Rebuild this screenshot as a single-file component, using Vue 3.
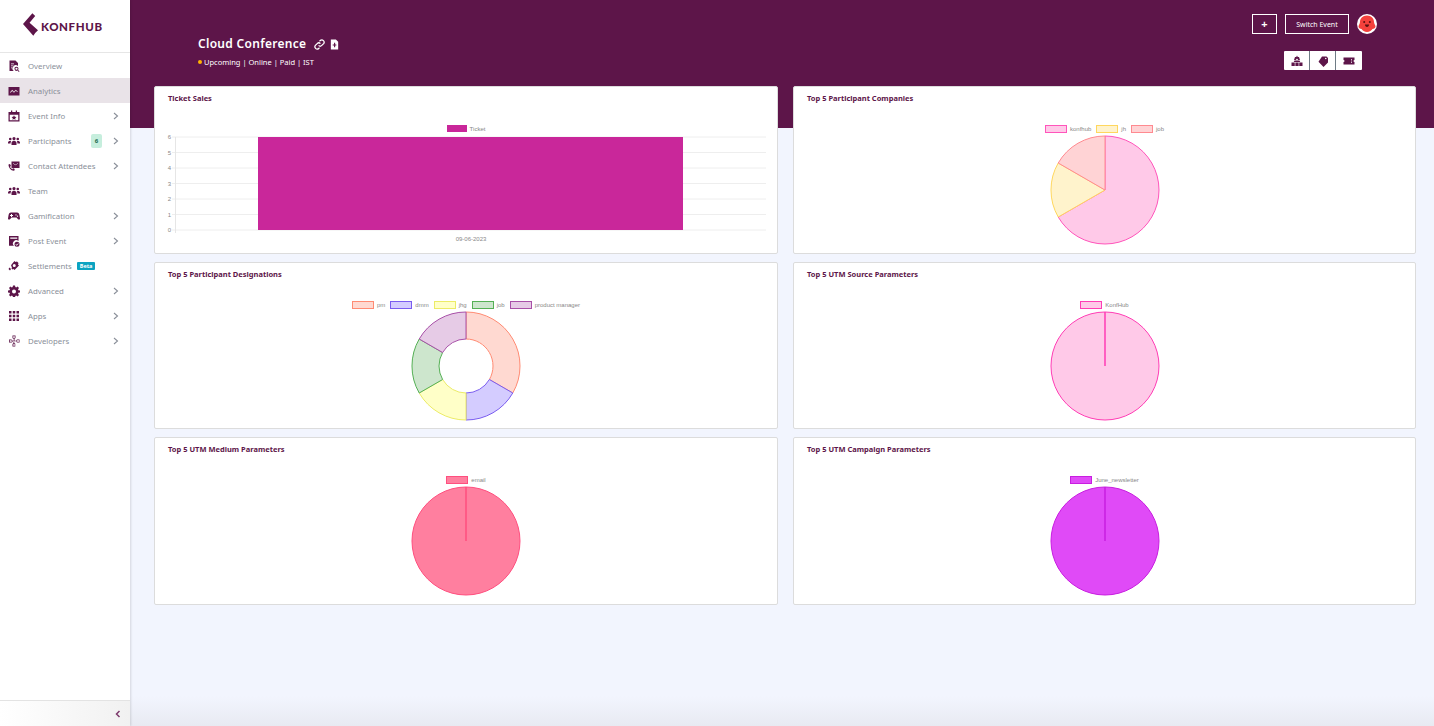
<script setup>
const purple = '#5d1549'

const people = 'M12 4a3.2 3.2 0 1 1 0 6.4A3.2 3.2 0 0 1 12 4zM4.5 5.5a2.6 2.6 0 1 1 0 5.2 2.6 2.6 0 0 1 0-5.2zM19.5 5.5a2.6 2.6 0 1 1 0 5.2 2.6 2.6 0 0 1 0-5.2zM7 20v-4c0-2.5 2-4.5 5-4.5s5 2 5 4.5v4zM0 17v-2c0-2 1.500-3.200 4-3.200 1 0 1.700.2 2.300.5C5.500 13.300 5.200 14.600 5.200 17zM24 17v-2c0-2-1.500-3.200-4-3.200-1 0-1.700.2-2.300.5.8 1 1.100 2.300 1.100 4.700z'

const menu = [
  { label: 'Overview', icon: 'M3 1h12l5 5v6a6.500 6.500 0 0 0-8.500 10H3zM6 7h6v1.500H6zM6 11h5v1.500H6zM6 15h3v1.500H6zM17 13.500a4 4 0 0 1 3.200 6.300l2.800 2.800-1.200 1.200-2.800-2.800A4 4 0 1 1 17 13.500zM17 15.300a2.200 2.200 0 1 0 0 4.400 2.200 2.200 0 0 0 0-4.400z' },
  { label: 'Analytics', active: true, icon: 'M1 4h22v17H1zM4 14.500l1.200 1.200L8.500 12l3.500 3.500 3.500-4 3 2.500 1.100-1.200-4.200-3.500-3.500 4L8.500 9.500z' },
  { label: 'Event Info', arrow: true, icon: 'M6 1h2.500v3h7V1H18v3h5v19H1V4h5zM3.500 9.500v11h17v-11zM12 10.500l1.500 3.100 3.400.4-2.500 2.300.7 3.400-3.100-1.700-3.100 1.700.7-3.400L7.100 14l3.400-.4z' },
  { label: 'Participants', arrow: true, badge: '6', icon: people },
  { label: 'Contact Attendees', arrow: true, icon: 'M7 3h16v13H12l-3 3v-3H7zM10 6v1l5 3.500L20 7V6l-5 3.500zM1 9l3-1 2 4-2 1.500c.6 2 2 3.500 4 4.300L9.500 16l4 2-1 3.500C6 22 1 15.500 1 9z' },
  { label: 'Team', icon: people },
  { label: 'Gamification', arrow: true, icon: 'M6 5h12c3 0 4.500 2.500 5 6l1 6c.2 2-2.500 3-4 1.500L17 15H7l-3 3.500C2.500 20 -.2 19 0 17l1-6c.5-3.500 2-6 5-6zM6 8v2H4v2h2v2h2v-2h2v-2H8V8zM16 8.500a1.300 1.300 0 1 0 0 2.600 1.300 1.300 0 0 0 0-2.600zM19 11a1.300 1.300 0 1 0 0 2.600 1.300 1.300 0 0 0 0-2.600z' },
  { label: 'Post Event', arrow: true, icon: 'M2 2h19v10a6.500 6.500 0 0 0-9 9.500H2zM4.500 5v2.500h14V5zM18 13.500a5 5 0 1 1 0 10 5 5 0 0 1 0-10zM20.500 16.500L17.300 19.700 15.800 18.200 15 19l2.300 2.300 4-4z' },
  { label: 'Settlements', beta: true, icon: 'M13 2l2 2 3-1 3 3-1 3 2 2-9 9-2-2-2 1-2-2 1-3-2-2 1-3zM12.500 8a3 3 0 1 0 0 6 3 3 0 0 0 0-6zM3 15l3 3-2 3-3-3z' },
  { label: 'Advanced', arrow: true, icon: 'M10 1h4l.7 3.200 1.700.7L19.200 3 22 5.800l-1.900 2.800.7 1.700L24 11v4l-3.200.7-.7 1.700 1.900 2.800L19.200 23l-2.800-1.900-1.700.7L14 25h-4l-.7-3.200-1.700-.7L4.800 23 2 20.200l1.900-2.800-.7-1.700L0 15v-4l3.200-.7.700-1.700L2 5.800 4.800 3l2.800 1.900 1.700-.7zM12 9a4 4 0 1 0 0 8 4 4 0 0 0 0-8z' },
  { label: 'Apps', arrow: true, icon: 'M2 2h5v5H2zM9.500 2h5v5h-5zM17 2h5v5h-5zM2 9.500h5v5H2zM9.500 9.500h5v5h-5zM17 9.500h5v5h-5zM2 17h5v5H2zM9.500 17h5v5h-5zM17 17h5v5h-5z' },
  { label: 'Developers', arrow: true, icon: 'M9 1h6v5l-2 2v3h3l2-2h5v6h-5l-2-2h-3v-1.500h3.500l2 2H22v-3h-3.500l-2 2H11.500V7.500l2-2V2.500h-3v3L12 7v1H10.500L9 6zM2 9h5l2 2h3v1.500H8.500l-2-2H3.500v3H7l2-2h1v1.500L7.500 15H2zM11 13.500h1.500v3.500l-2 2v2.500h3V19L12 17.500V16h1.500l1 1.500V23H9v-5l2-2z' },
]

const headerActions = [
  { name: 'stage', d: 'M12 1l1.500 3H16l2 6h-3.500L12 7l-2.500 3H6l2-6h2.500zM7 11h10l1.500 3h-13zM1 15h6.500v7H1zM8.750 15h6.500v7h-6.500zM16.500 15H23v7h-6.500z' },
  { name: 'tags', d: 'M10 3h9l3 3v9l-9 9L3 13.500zM17.500 5.500a1.500 1.500 0 1 0 0 3 1.500 1.500 0 0 0 0-3z' },
  { name: 'ticket', d: 'M1 5h22v5a2 2 0 0 0 0 4v5H1v-5a2 2 0 0 0 0-4zM16 8v2h1.500V8zM16 11v2h1.500v-2zM16 14v2h1.500v-2z' },
]

// chart.js style colours read off the reference
const c = {
  pinkFill: '#ffc9e8', pinkLine: '#ff55bb',
  yellowFill: '#fff3cc', yellowLine: '#ffd75e',
  redFill: '#ffd3d5', redLine: '#ff8a90',
}

const charts = [
  { title: 'Top 5 Participant Companies', inner: 0, slices: [
    { label: 'konfhub', value: 4, fill: c.pinkFill, line: c.pinkLine },
    { label: 'jh', value: 1, fill: c.yellowFill, line: c.yellowLine },
    { label: 'job', value: 1, fill: c.redFill, line: c.redLine },
  ] },
  { title: 'Top 5 Participant Designations', inner: 27, slices: [
    { label: 'pm', value: 2, fill: '#ffd9d1', line: '#ff8b73' },
    { label: 'dmm', value: 1, fill: '#d4ccff', line: '#7a5cf0' },
    { label: 'jhg', value: 1, fill: '#ffffc8', line: '#ecec66' },
    { label: 'job', value: 1, fill: '#cde6cd', line: '#55b055' },
    { label: 'product manager', value: 1, fill: '#e6cbe6', line: '#a850a8' },
  ] },
  { title: 'Top 5 UTM Source Parameters', inner: 0, slices: [
    { label: 'KonfHub', value: 1, fill: c.pinkFill, line: '#ff3db5' },
  ] },
  { title: 'Top 5 UTM Medium Parameters', inner: 0, slices: [
    { label: 'email', value: 1, fill: '#ff7f9f', line: '#ff4f7f' },
  ] },
  { title: 'Top 5 UTM Campaign Parameters', inner: 0, slices: [
    { label: 'June_newsletter', value: 1, fill: '#e04af7', line: '#c81ee0' },
  ] },
]

function point(r, angle) {
  const a = (angle - 90) * Math.PI / 180
  return `${(55 + r * Math.cos(a)).toFixed(2)} ${(55 + r * Math.sin(a)).toFixed(2)}`
}

function arcs(chart) {
  const total = chart.slices.reduce((sum, s) => sum + s.value, 0)
  let start = 0
  return chart.slices.map(s => {
    // a single slice is a full circle, stop just short so the arc still draws
    const sweep = Math.min(s.value / total * 360, 359.99)
    const end = start + sweep
    const big = sweep > 180 ? 1 : 0
    const R = 54
    const r = chart.inner
    let d = `M${point(R, start)}A${R} ${R} 0 ${big} 1 ${point(R, end)}`
    if (r) {
      d += `L${point(r, end)}A${r} ${r} 0 ${big} 0 ${point(r, start)}Z`
    } else {
      d += `L55 55Z`
    }
    start = end
    return { d, fill: s.fill, line: s.line }
  })
}

const yTicks = [6, 5, 4, 3, 2, 1, 0]
function tickY(t) {
  return 3 + (6 - t) * 15.5
}
</script>

<template>
  <div class="shell">
    <aside class="sidebar">
      <div class="logo">
        <svg class="logo-mark" viewBox="0 0 16 24">
          <path d="M10 0l3 3-6 7 9 8-3 3-2 3L0 11.500z" fill="#5d1549" />
        </svg>
        <span class="logo-text">KONFHUB</span>
      </div>

      <nav class="menu">
        <a v-for="item in menu" :key="item.label" class="menu-item" :class="{ active: item.active }">
          <svg class="menu-icon" viewBox="0 0 24 24">
            <path :d="item.icon" fill="#5d1549" fill-rule="evenodd" />
          </svg>
          <span class="menu-label">{{ item.label }}</span>
          <span v-if="item.beta" class="beta">Beta</span>
          <span v-if="item.badge" class="count">{{ item.badge }}</span>
          <svg v-if="item.arrow" class="menu-arrow" viewBox="0 0 6 8">
            <path d="M1 1l3.500 3L1 7" fill="none" stroke="#8a8f99" stroke-width="1.100" />
          </svg>
        </a>
      </nav>

      <div class="collapse">
        <svg viewBox="0 0 6 8">
          <path d="M4.500 1L1.500 4l3 3" fill="none" stroke="#7d3a6c" stroke-width="1.500" />
        </svg>
      </div>
    </aside>

    <main class="main">
      <header class="banner">
        <div class="event">
          <div class="event-title">
            <h1>Cloud Conference</h1>
            <svg class="title-icon" viewBox="0 0 24 24">
              <path d="M10 14a5 5 0 0 0 7 0l4-4a5 5 0 0 0-7-7l-2 2M14 10a5 5 0 0 0-7 0l-4 4a5 5 0 0 0 7 7l2-2" fill="none" stroke="#fff" stroke-width="2.800" />
            </svg>
            <svg class="title-icon" viewBox="0 0 24 24">
              <path d="M4 1h11l5 5v17H4zM11 8v4H8v2h3v4h2.500v-4H16v-2h-2.500V8z" fill="#fff" fill-rule="evenodd" />
            </svg>
          </div>
          <p class="event-meta"><i class="dot"></i>Upcoming | Online | Paid | IST</p>
        </div>

        <div class="actions">
          <div class="actions-top">
            <button type="button" class="outline plus">+</button>
            <button type="button" class="outline switch">Switch Event</button>
            <svg class="avatar" viewBox="0 0 20 20">
              <circle cx="10" cy="10" r="10" fill="#fff" />
              <path d="M10 1.500c4.500 0 7 3 7 6.500 0 2 1.500 3 1.500 4.500S17 15 15.500 15c-.8 1.500-3 3-5.500 3s-4.700-1.500-5.500-3C3 15 1.500 14 1.500 12.500S3 10 3 8c0-3.500 2.500-6.500 7-6.500z" fill="#f4413c" />
              <circle cx="7.200" cy="8" r="1" fill="#5a1010" />
              <circle cx="12.800" cy="8" r="1" fill="#5a1010" />
              <path d="M8 10.500h4c0 1.500-.8 2.500-2 2.500s-2-1-2-2.500z" fill="#5a1010" />
            </svg>
          </div>
          <div class="actions-tools">
            <span v-for="tool in headerActions" :key="tool.name" class="tool">
              <svg viewBox="0 0 24 24"><path :d="tool.d" fill="#5d1549" fill-rule="evenodd" /></svg>
            </span>
          </div>
        </div>
      </header>

      <section class="grid">
        <article class="card">
          <h2>Ticket Sales</h2>
          <div class="legend">
            <span class="legend-item"><i class="swatch solid"></i>Ticket</span>
          </div>
          <svg class="bar-chart" viewBox="0 0 599 110" width="599" height="110">
            <g v-for="t in yTicks" :key="t">
              <line x1="4" :y1="tickY(t)" x2="598" :y2="tickY(t)" stroke="#eeeeee" stroke-width="1" />
              <text x="3" :y="tickY(t) + 2" text-anchor="end" class="tick">{{ t }}</text>
            </g>
            <line x1="7.500" y1="3" x2="7.500" y2="99" stroke="#e6e6e6" stroke-width="1" />
            <rect x="90" y="3" width="425" height="93" fill="#c9279a" />
            <text x="303" y="107" text-anchor="middle" class="tick">09-06-2023</text>
          </svg>
        </article>

        <article v-for="chart in charts" :key="chart.title" class="card">
          <h2>{{ chart.title }}</h2>
          <div class="legend">
            <span v-for="s in chart.slices" :key="s.label" class="legend-item">
              <i class="swatch" :style="{ background: s.fill, borderColor: s.line }"></i>{{ s.label }}
            </span>
          </div>
          <svg class="pie" viewBox="0 0 110 110" width="110" height="110">
            <path v-for="(a, i) in arcs(chart)" :key="i" :d="a.d" :fill="a.fill" :stroke="a.line" stroke-width="1" />
          </svg>
        </article>
      </section>
    </main>
  </div>
</template>

<style scoped>
.shell {
  display: flex;
  height: 726px;
  overflow: hidden;
  font-family: "Noto Sans", "Liberation Sans", sans-serif;
}

.sidebar {
  flex: 0 0 130px;
  display: flex;
  flex-direction: column;
  background: #fff;
  box-shadow: 1px 0 2px rgba(0, 0, 0, 0.12);
  position: relative;
  z-index: 1;
}

.logo {
  height: 52px;
  flex: none;
  border-bottom: 1px solid #e6e6e6;
  display: flex;
  align-items: center;
  padding-left: 23px;
  gap: 3px;
}

.logo-mark {
  width: 15px;
  height: 23px;
  margin-top: -3px;
}

.logo-text {
  font-family: "Lato", sans-serif;
  font-weight: 900;
  font-size: 11.5px;
  letter-spacing: 0.6px;
  color: #5d1549;
}

.menu {
  flex: 1;
}

.menu-item {
  height: 25px;
  display: flex;
  align-items: center;
  padding: 0 11px 0 8px;
  font-size: 7.8px;
  color: #8a8f99;
}

.menu-item.active {
  background: #e9e3e8;
}

.menu-icon {
  width: 12px;
  height: 12px;
  flex: none;
  margin-right: 8px;
}

.menu-arrow {
  width: 6px;
  height: 8px;
  margin-left: auto;
}

.count {
  margin-left: auto;
  width: 11px;
  height: 14px;
  border-radius: 2px;
  background: #c6eedd;
  color: #1d6b4e;
  font-size: 6px;
  font-weight: 700;
  text-align: center;
  line-height: 14px;
}

.count + .menu-arrow {
  margin-left: 11px;
}

.beta {
  margin-left: 5px;
  padding: 0 3px;
  height: 8px;
  line-height: 8px;
  border-radius: 1px;
  background: #0ba3c1;
  color: #fff;
  font-size: 5.500px;
  font-weight: 700;
}

.collapse {
  height: 25px;
  flex: none;
  border-top: 1px solid #e3e3e3;
  background: linear-gradient(to right, #ffffff, #f1f1f1);
  display: flex;
  align-items: center;
  justify-content: flex-end;
  padding-right: 9px;
}

.collapse svg {
  width: 6px;
  height: 8px;
}

.main {
  flex: 1;
  min-width: 0;
  background: linear-gradient(to bottom, #f2f5fe 0, #f2f5fe 696px, #e8eaf2 726px);
}

.banner {
  height: 128px;
  background: #5d1549;
  display: flex;
  justify-content: space-between;
  align-items: flex-start;
  padding: 14px 57px 0 68px;
  box-sizing: border-box;
}

.event {
  padding-top: 22px;
  color: #fff;
}

.event-title {
  display: flex;
  align-items: center;
  gap: 3px;
}

h1 {
  margin: 0 5px 0 0;
  font-size: 12px;
  line-height: 16px;
  font-weight: 600;
  letter-spacing: 0.3px;
}

.title-icon {
  width: 11px;
  height: 11px;
  margin-right: 1px;
}

.event-meta {
  margin: 5px 0 0;
  font-size: 7.500px;
  line-height: 10px;
  display: flex;
  align-items: center;
}

.dot {
  width: 4px;
  height: 4px;
  border-radius: 50%;
  background: #ffb400;
  margin-right: 2px;
}

.actions {
  display: flex;
  flex-direction: column;
  align-items: flex-end;
}

.actions-top {
  display: flex;
  align-items: center;
  gap: 8px;
}

.outline {
  height: 20px;
  padding: 0;
  background: transparent;
  border: 1px solid #fff;
  border-radius: 0;
  color: #fff;
  font-family: inherit;
}

.plus {
  width: 25px;
  font-size: 11px;
  font-weight: 700;
  line-height: 14px;
}

.switch {
  width: 64px;
  font-size: 7px;
}

.avatar {
  width: 20px;
  height: 20px;
}

.actions-tools {
  margin: 17px 15px 0 0;
  display: flex;
  background: #fff;
  border-radius: 1px;
}

.tool {
  width: 25px;
  height: 19px;
  display: flex;
  align-items: center;
  justify-content: center;
  border-left: 1px solid #6e7b85;
}

.tool:first-child {
  border-left: 0;
}

.tool:last-child {
  width: 26px;
}

.tool svg {
  width: 12px;
  height: 12px;
}

.grid {
  margin: -42px 18px 0 24px;
  display: grid;
  grid-template-columns: 624px 623px;
  column-gap: 15px;
  grid-template-rows: 168px 167px 168px;
  row-gap: 8px;
}

.card {
  background: #fff;
  border: 1px solid #dcdcdc;
  border-radius: 2px;
  box-sizing: border-box;
  padding: 6px 13px 0;
  display: flex;
  flex-direction: column;
  min-width: 0;
}

h2 {
  margin: 0;
  font-size: 7.500px;
  line-height: 11px;
  font-weight: 700;
  color: #5d1549;
}

.legend {
  margin-top: 20px;
  height: 10px;
  display: flex;
  justify-content: center;
  gap: 5px;
  font-family: "Liberation Sans", sans-serif;
  font-size: 6px;
  color: #888;
}

.legend-item {
  display: flex;
  align-items: center;
  gap: 3px;
}

.swatch {
  width: 20px;
  height: 6px;
  box-sizing: content-box;
  border: 1px solid transparent;
  margin-top: -1px;
}

.swatch.solid {
  background: #c9279a;
  width: 20px;
  border: 0;
  height: 7px;
}

.bar-chart {
  display: block;
  overflow: visible;
}

.tick {
  font-family: "Liberation Sans", sans-serif;
  font-size: 6px;
  fill: #888;
}

.pie {
  display: block;
  margin: 1px auto 0;
}
</style>

<style>
html, body {
  margin: 0;
  background: #f2f5fe;
}
</style>
